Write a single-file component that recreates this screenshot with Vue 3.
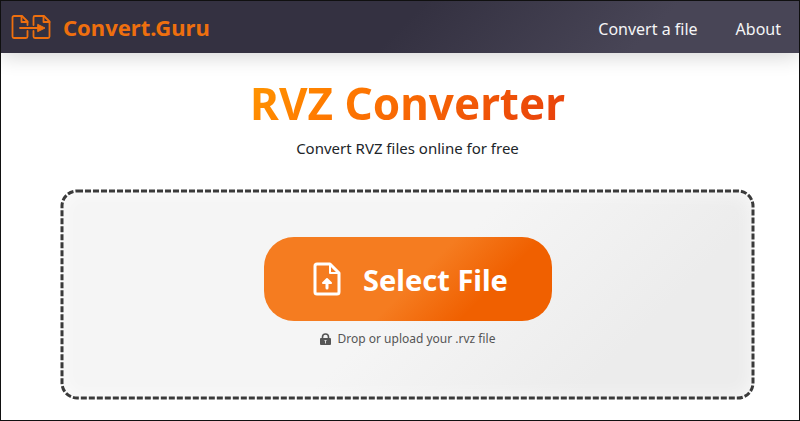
<template>
  <div class="page">
    <header class="header">
      <a class="logo" href="#">
        <svg class="logo-icon" viewBox="0 0 40 26" fill="none" stroke="currentColor" stroke-width="1.8" stroke-linejoin="round" stroke-linecap="round">
          <path d="M16.500 11V7.500L11 2H3A1.500 1.500 0 0 0 1.500 3.500v19A1.500 1.500 0 0 0 3 24h12a1.500 1.500 0 0 0 1.500-1.500V17" />
          <path d="M10.500 2v6h6" />
          <path d="M22.500 11V3.500A1.500 1.500 0 0 1 24 2h9l5.500 5.500v15A1.500 1.500 0 0 1 37 24H24a1.500 1.500 0 0 1-1.500-1.500V17" />
          <path d="M32.500 2v6h6" />
          <path d="M9 14h18" />
          <path d="M27 10.500l7 3.500-7 3.500z" fill="currentColor" stroke-width="1" />
        </svg>
        <span>Convert.Guru</span>
      </a>
      <nav class="nav">
        <a href="#">Convert a file</a>
        <a href="#">About</a>
      </nav>
    </header>

    <main class="main">
      <h1 class="title">RVZ Converter</h1>
      <p class="subtitle">Convert RVZ files online for free</p>

      <div class="dropzone" @dragover.prevent @drop.prevent="onDrop">
        <!-- Dashed outline -->
        <svg class="outline" aria-hidden="true">
          <rect width="100%" height="100%" rx="15" />
        </svg>

        <button class="select-button" type="button" @click="openPicker">
          <svg class="file-icon" viewBox="0 0 28 34" fill="none" stroke="currentColor" stroke-width="3" stroke-linejoin="round" stroke-linecap="round">
            <path d="M4 2h13l9 9v19a2 2 0 0 1-2 2H4a2 2 0 0 1-2-2V4a2 2 0 0 1 2-2z" />
            <path d="M17 2v9h9" stroke-width="2" />
            <path d="M14 26v-7" />
            <path d="M10 21l4-4 4 4z" fill="currentColor" stroke-width="2" />
          </svg>
          <span>Select File</span>
        </button>
        <input ref="fileInput" type="file" accept=".rvz" aria-label="Select File" hidden @change="onChange">

        <p class="hint">
          <svg class="lock-icon" viewBox="0 0 11 12">
            <path d="M2.500 5.500V4a3 3 0 0 1 6 0v1.500" fill="none" stroke="currentColor" stroke-width="1.600" />
            <rect y="5" width="11" height="7" rx="1" fill="currentColor" />
            <path d="M5.500 7v3.500M4.500 7.500h2" stroke="#ddd" />
          </svg>
          <span>Drop or upload your .rvz file</span>
        </p>
      </div>
    </main>
  </div>
</template>

<script setup>
import { ref } from 'vue';

const fileInput = ref(null);
const file = ref(null);

// Open the system file dialog
const openPicker = () => {
  fileInput.value.click();
};

const onChange = (e) => {
  file.value = e.target.files[0];
};

const onDrop = (e) => {
  file.value = e.dataTransfer.files[0];
};
</script>

<style>
body {
  margin: 0;
  background: #fff;
}
</style>

<style scoped>
.page {
  box-sizing: border-box;
  min-height: 100vh;
  border: 1px solid #111;
  font-family: "Segoe UI", "Noto Sans", "Open Sans", sans-serif;
  color: #212529;
}

.header {
  display: flex;
  align-items: center;
  justify-content: space-between;
  height: 52px;
  padding: 0 18px 0 10px;
  background: linear-gradient(135deg, #343141 0%, #343141 50%, #484556 80%, #484556 100%);
  box-shadow: 0 4px 20px rgba(0, 0, 0, 0.16);
}

.logo {
  display: flex;
  align-items: center;
  gap: 12px;
  color: #ee6f0e;
  font-size: 22px;
  font-weight: 700;
  text-decoration: none;
}

.logo-icon {
  width: 40px;
  height: 26px;
}

.nav {
  display: flex;
  gap: 38px;
  padding-top: 4px;
}

.nav a {
  color: #f5f5f7;
  font-size: 16px;
  text-decoration: none;
}

.main {
  padding: 20px 45px 20px 60px;
  text-align: center;
}

.title {
  width: fit-content;
  margin: 0 auto;
  font-size: 44px;
  font-weight: 700;
  line-height: 60px;
  color: transparent;
  background: linear-gradient(135deg, #ff9800 0%, #ff7a00 30%, #e63c0c 100%);
  background-clip: text;
}

.subtitle {
  margin: 4px 0 31px;
  font-size: 15px;
  line-height: 22px;
}

.dropzone {
  position: relative;
  display: flex;
  flex-direction: column;
  align-items: center;
  padding: 47px 0 51px;
  border-radius: 16px;
  background: linear-gradient(135deg, #f5f5f5 0%, #f5f5f5 50%, #ececec 80%, #ececec 100%);
  box-shadow: inset 0 0 20px rgba(255, 255, 255, 0.8);
}

.outline {
  position: absolute;
  inset: 1px;
  width: calc(100% - 2px);
  height: calc(100% - 2px);
  overflow: visible;
  pointer-events: none;
}

.outline rect {
  fill: none;
  stroke: #3a3a3a;
  stroke-width: 3;
  stroke-dasharray: 6 2;
}

.select-button {
  display: flex;
  align-items: center;
  justify-content: center;
  gap: 22px;
  width: 288px;
  height: 84px;
  padding: 0 0 0 6px;
  border: none;
  border-radius: 30px;
  background: linear-gradient(135deg, #f57c20 0%, #f57c20 52%, #f06000 75%, #f06000 100%);
  color: #fff;
  font-family: inherit;
  font-size: 29px;
  font-weight: 700;
  cursor: pointer;
}

.file-icon {
  width: 28px;
  height: 34px;
}

.hint {
  display: flex;
  align-items: center;
  gap: 7px;
  margin: 8px 0 0;
  color: #555;
  font-size: 12px;
  line-height: 19px;
}

.lock-icon {
  width: 11px;
  height: 12px;
}
</style>
